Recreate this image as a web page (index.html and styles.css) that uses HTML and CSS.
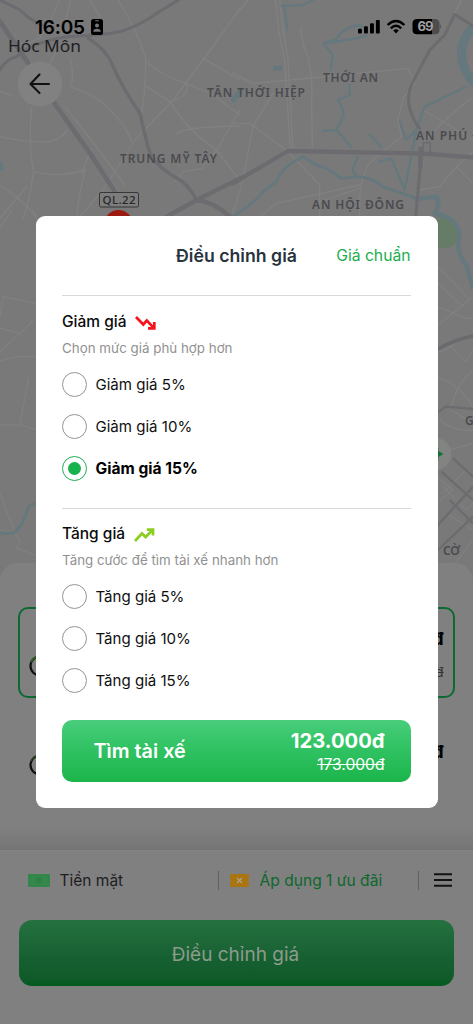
FILE: index.html
```html
<!DOCTYPE html>
<html lang="vi">
<head>
<meta charset="utf-8">
<meta name="viewport" content="width=device-width, initial-scale=1">
<title>Điều chỉnh giá</title>
<link rel="stylesheet" href="styles.css">
</head>
<body>
<main class="screen">
  <section class="map">
    <svg class="map-canvas" viewBox="0 0 473 580" width="473" height="580">
      <rect width="473" height="580" fill="#797979"/>
      <!-- north-west quarter -->
      <g transform="scale(.33333)" fill="none" stroke-linecap="round" stroke-linejoin="round">
        <g stroke="#818181" stroke-width="4">
          <path d="M212 0Q190 90 170 150L148 195M178 0Q145 80 118 115L40 150M270 0L300 50M355 0Q410 90 437 175Q437 270 425 340M720 25L620 165L520 300L405 420L310 570L235 655"/>
          <path d="M210 175Q225 230 210 260Q290 285 330 330Q380 380 395 425M195 320L285 435L375 555M180 330L265 450L355 575"/>
          <path d="M440 185Q490 230 560 250Q570 290 510 305Q470 280 440 260M560 250L640 285L720 345M610 175L720 240M510 305Q560 390 650 450L720 540M530 400Q560 380 720 378M720 330L650 450L605 505L550 515L525 545"/>
          <path d="M95 325Q85 430 100 515Q90 600 70 655M0 410Q90 430 150 425Q195 410 200 390M100 515Q170 535 255 510Q235 590 230 655M275 445L245 520M0 555Q70 600 110 655M0 655L80 560M0 275L35 285"/>
        </g>
        <g stroke="#6b6b70">
          <path stroke-width="9" d="M0 0L60 30Q90 60 125 75M0 210Q20 175 50 170Q100 125 200 110Q330 105 370 92Q430 70 470 40L535 0"/>
          <path stroke-width="10" d="M265 115Q320 150 335 190Q370 270 420 340Q435 410 450 460Q475 505 540 540Q565 555 590 600"/>
          <path stroke-width="14" d="M0 65L85 190M160 305L270 460L345 575"/>
          <path stroke-width="13" d="M500 650L590 600L720 535M590 600Q640 605 690 650"/>
        </g>
        <path stroke="#64787e" stroke-width="16" d="M720 275L700 300M0 490L3 505"/>
      </g>
      <!-- north-east quarter -->
      <g transform="translate(233 0) scale(.33333)" fill="none" stroke-linecap="round" stroke-linejoin="round">
        <g stroke="#818181" stroke-width="4">
          <path d="M128 0Q135 100 155 180L172 450M140 0Q148 80 165 180L180 450M203 80Q205 130 225 170Q240 240 236 300L238 450M45 0L0 55M0 220L60 250L170 240L525 205L545 250L510 295L495 360L505 410L420 480Q375 520 380 650"/>
          <path d="M0 370L50 370L160 450L260 555V650M120 280L60 380L30 540L0 640M260 605L380 565M75 655L130 610L380 555M685 0L665 40M720 290Q640 350 560 440M570 330Q640 370 720 420M720 455L670 500L620 560L560 570M670 500L720 550"/>
        </g>
        <g stroke="#64787e">
          <path stroke-width="7" d="M145 18L210 15L240 0M155 25L163 90M400 90L380 75Q330 80 310 118L270 130L300 165L293 210M275 130Q350 120 400 108M350 255V285L315 300Q335 330 330 350L310 390L355 440M270 392H310M700 260L575 320L550 390L515 570L475 475L440 485M375 470L358 510L370 530M555 385L520 420L500 365M410 405L445 440"/>
          <path stroke-width="8" d="M0 650Q75 600 90 575L130 545Q145 500 210 470L250 495Q280 500 325 535L380 530Q420 535 450 560L550 595"/>
          <path stroke-width="13" d="M550 597L610 590Q625 610 605 640L650 660"/>
          <path stroke-width="26" d="M720 80Q650 160 720 245"/>
        </g>
        <path fill="#64787e" d="M120 200L148 195L145 212H120Z"/>
        <g stroke="#6c6c70">
          <path stroke-width="9" d="M720 78L665 43L635 105L590 150L540 245Q520 285 530 325Q540 360 560 385M565 465L548 650"/>
          <path stroke-width="13" d="M0 550L165 453L560 460L720 472M562 445V500"/>
          <path stroke-width="5" d="M570 455V428H592V460"/>
        </g>
        <path stroke="#857a79" stroke-width="5" d="M720 150Q705 185 720 212"/>
      </g>
      <!-- strip right of the dialog -->
      <g transform="translate(233 210) scale(.33333)" fill="none" stroke-linejoin="round">
        <ellipse cx="635" cy="70" rx="43" ry="45" fill="#677c67"/>
        <path stroke="#64787e" stroke-width="13" d="M600 10Q665 15 680 70Q665 125 700 165L720 235"/>
        <g stroke="#848484" stroke-width="3">
          <path d="M610 165L710 270M610 215L690 290M610 350L720 260M610 290L665 310Q700 330 720 325M640 395L700 455L720 420M610 430L665 405M610 500Q680 520 720 590M720 480Q670 520 655 590M610 620Q660 670 720 660M650 720L720 700M655 600L720 640"/>
          <path d="M610 800L660 840L610 880M630 850L700 780L720 800M630 830L700 900L720 880M640 910L720 960M720 990L650 1080"/>
        </g>
        <path stroke="#69696e" stroke-width="10" d="M610 420Q660 390 720 378"/>
        <path stroke="#6c6c70" stroke-width="7" d="M610 610L638 590L720 597M625 785L720 870M660 745L720 800M610 950L720 830M650 870L720 940M615 1020L720 920"/>
        <circle cx="607" cy="732" r="48" fill="#818481"/>
        <path fill="#146e35" d="M607 710L616 712V723L631 732L616 741V752L607 754Z"/>
      </g>
      <!-- strip left of the dialog -->
      <g transform="translate(0 210) scale(.33333)" fill="none" stroke-linejoin="round">
        <path stroke="#818181" stroke-width="3.5" d="M0 55L35 0M95 0L110 20M0 320L10 260L105 280M0 355L60 370M0 425L60 370L105 325M0 452L50 440H105M85 505L60 645M0 645H60L105 658M0 850L45 970L60 995L50 1015L105 1035M0 960L45 970"/>
        <path stroke="#64787e" stroke-width="9" d="M0 970H40Q75 940 85 890L105 880"/>
      </g>
      <g class="map-labels">
        <text x="120" y="163" textLength="97">TRUNG MỸ TÂY</text>
        <text x="207" y="97" textLength="98">TÂN THỚI HIỆP</text>
        <text x="323" y="81.5" textLength="55">THỚI AN</text>
        <text x="416" y="140" textLength="65">AN PHÚ Đ</text>
        <text x="312" y="209" textLength="92">AN HỘI ĐÔNG</text>
        <text x="465" y="425">G</text>
        <text x="443" y="555" textLength="17">CỜ</text>
      </g>
      <text class="map-town" x="8" y="52" textLength="73" lengthAdjust="spacingAndGlyphs">Hóc Môn</text>
      <circle cx="118.5" cy="224.5" r="14.5" fill="#9d1a12"/>
      <rect x="99.5" y="192.5" width="39" height="14.5" rx="1.5" fill="#7d7d7d" stroke="#37373b"/>
      <text class="map-road" x="102.5" y="204" textLength="33">QL.22</text>
      <circle cx="40" cy="84" r="22.5" fill="#818181"/>
      <path d="M49 84H31M39.5 74.5L30.5 84L39.5 93" fill="none" stroke="#111" stroke-width="2.1" stroke-linecap="round" stroke-linejoin="round"/>
    </svg>
    <header class="status">
      <span class="clock">16:05</span>
      <svg class="focus-icon" width="12" height="16" viewBox="0 0 12 16"><rect width="12" height="16" rx="2.5"/><rect x="4" y="1.3" width="4" height="1" rx=".5" fill="#777"/><circle cx="6" cy="6.6" r="2" fill="#777"/><path d="M2.2 12.8Q2.2 9.8 6 9.8T9.8 12.8Z" fill="#777"/></svg>
      <svg class="signal" width="84" height="16" viewBox="0 0 84 16">
        <rect x="1" y="9.7" width="3.9" height="4.8" rx="1"/><rect x="7" y="7.2" width="3.9" height="7.3" rx="1"/><rect x="13" y="4.2" width="3.9" height="10.3" rx="1"/><rect x="18.9" y="1" width="3.9" height="13.5" rx="1"/>
        <g fill="none" stroke="#000" stroke-width="2.4"><path d="M30.6 6Q39 -2 47.4 6M33.8 9.3Q39 4.4 44.2 9.3"/></g>
        <path d="M36.2 11.4Q39 9.2 41.8 11.4L39 14.4Z"/>
        <path d="M74.5 0H78Q82.5 0 82.5 4.5V10.7Q82.5 15.2 78 15.2H74.5ZM83 5Q84.8 7.5 83 10Z" fill="#4d4d4d"/>
        <path d="M60 0H75V15.2H60Q55.5 15.2 55.5 10.7V4.5Q55.5 0 60 0Z"/>
        <text class="battery-level" x="60.5" y="12" textLength="16">69</text>
      </svg>
    </header>
  </section>

  <section class="sheet">
    <div class="ride ride-selected">
      <svg width="20" height="24" viewBox="0 0 20 24"><circle cx="11" cy="13" r="9.5" fill="none" stroke="#111" stroke-width="2.2"/><path d="M2 9Q5 3 12 3" fill="none" stroke="#2d601d" stroke-width="2"/></svg>
      <div class="fare"><b>đ</b><s>đ</s></div>
    </div>
    <div class="ride">
      <svg width="20" height="24" viewBox="0 0 20 24"><circle cx="11" cy="13" r="9.5" fill="none" stroke="#111" stroke-width="2.2"/><path d="M2 9Q5 3 12 3" fill="none" stroke="#2d601d" stroke-width="1"/></svg>
      <div class="fare"><b>đ</b></div>
    </div>
  </section>

  <footer class="footer">
    <div class="payment">
      <svg class="cash" width="22" height="13" viewBox="0 0 22 13"><rect width="22" height="13" rx="1" fill="#34884c"/><rect x="1.5" y="1.5" width="19" height="10" fill="none" stroke="#2f8147" stroke-width=".5"/><circle cx="11" cy="6.5" r="3" fill="#2f7f46"/></svg>
      <span class="cash-label">Tiền mặt</span>
      <i class="bar"></i>
      <svg class="coupon" width="19" height="13" viewBox="0 0 19 13"><path d="M1 0H18Q19 0 19 1V4.5L18 6.5L19 8.5V12Q19 13 18 13H1Q0 13 0 12V8.5L1 6.5L0 4.5V1Q0 0 1 0Z" fill="#a97513"/><path d="M7 4L12 9M12 4L7 9" stroke="#b5a187" stroke-width="1.2"/></svg>
      <span class="promo">Áp dụng 1 ưu đãi</span>
      <i class="bar bar-end"></i>
      <svg class="menu" width="18" height="14" viewBox="0 0 18 14"><path d="M0 1.2H18M0 7H18M0 12.8H18" stroke="#121212" stroke-width="2"/></svg>
    </div>
    <button class="adjust"><span>Điều chỉnh giá</span></button>
  </footer>

  <div class="dialog" role="dialog">
    <div class="dialog-head">
      <h1>Điều chỉnh giá</h1>
      <a class="standard">Giá chuẩn</a>
    </div>
    <section class="group">
      <h2><span class="t-down">Giảm giá</span>
        <svg width="21" height="16" viewBox="0 0 21 16" fill="none" stroke="#f5141e" stroke-width="2.7"><path d="M1 2L8.3 9.5L11.8 5.5L18.5 12.6"/><path d="M13 13.4H19.3V7"/></svg>
      </h2>
      <p class="p-down">Chọn mức giá phù hợp hơn</p>
      <label class="option"><i class="radio"></i><span>Giảm giá 5%</span></label>
      <label class="option"><i class="radio"></i><span>Giảm giá 10%</span></label>
      <label class="option option-on"><i class="radio"></i><span>Giảm giá 15%</span></label>
    </section>
    <section class="group">
      <h2><span class="t-up">Tăng giá</span>
        <svg width="21" height="16" viewBox="0 0 21 16" fill="none" stroke="#8cce20" stroke-width="2.7"><path d="M1 14L8 6.5L11.6 10L18.5 3"/><path d="M12.8 2.6H19V8.5"/></svg>
      </h2>
      <p class="p-up">Tăng cước để tìm tài xế nhanh hơn</p>
      <label class="option"><i class="radio"></i><span>Tăng giá 5%</span></label>
      <label class="option"><i class="radio"></i><span>Tăng giá 10%</span></label>
      <label class="option"><i class="radio"></i><span>Tăng giá 15%</span></label>
    </section>
    <button class="find">
      <span class="find-label">Tìm tài xế</span>
      <span class="find-price"><b>123.000đ</b><s>173.000đ</s></span>
    </button>
  </div>
</main>
</body>
</html>
```
FILE: styles.css
```css
* { box-sizing: border-box; }
body { margin: 0; font-family: Inter, sans-serif; }
h1, h2, p { margin: 0; }
svg { display: block; flex: none; }
button { border: 0; font-family: inherit; }

.screen {
  position: relative;
  display: flex;
  flex-direction: column;
  width: 473px;
  height: 1024px;
  overflow: hidden;
  background: #808080;
}

.map { position: relative; height: 563px; flex: none; }
.map-labels { font: 600 12px "Noto Sans", sans-serif; fill: #4b4b4f; }
.map-town { font: 400 17px "Noto Sans", sans-serif; fill: #202022; }
.map-road { font: 500 11.5px "Noto Sans", sans-serif; fill: #27272a; }

.status {
  position: absolute;
  inset: 16px 32px auto 35px;
  height: 22px;
  display: flex;
  align-items: center;
}
.clock { width: 50px; padding-top: 1px; font-size: 19px; line-height: 20px; font-weight: 600; white-space: nowrap; letter-spacing: -.2px; }
.focus-icon { margin-left: 5.5px; }
.signal { margin-left: auto; }
.battery-level { font-size: 13px; font-weight: 700; fill: #a0a0a0; }

.sheet {
  position: relative;
  height: 287px;
  flex: none;
  padding: 44px 18px 0;
  border-radius: 18px 18px 0 0;
  background: linear-gradient(to bottom, #808080 265px, #757575 287px);
}
.ride {
  display: flex;
  align-items: center;
  justify-content: space-between;
  height: 91px;
  padding: 0 12px 0 11px;
}
.ride + .ride { margin-top: 7px; padding-top: 26px; }
.ride-selected { padding: 24px 10px 0 9px; border: 2px solid #0d6932; border-radius: 10px; }
.fare { display: flex; flex-direction: column; align-items: flex-end; gap: 13px; margin-right: -.5px; }
.ride-selected .fare { margin-top: -21px; }
.ride:last-child .fare { margin-top: -24px; }
.fare b { font-size: 18px; line-height: 22px; font-weight: 700; }
.fare s { font-size: 13px; line-height: 18px; color: #333; }

.footer { height: 174px; padding: 16px 19px 0; background: #808080; border-top: 1px solid #838383; }
.payment { display: flex; align-items: center; height: 26px; margin-left: 9.5px; }
.cash, .coupon, .menu { margin-left: -.5px; margin-right: .5px; }
.cash-label, .promo { padding-top: 1px; font-size: 15.5px; line-height: 20px; white-space: nowrap; color: #1d1d1f; }
.cash-label { width: 158px; margin-left: 9px; margin-right: .5px; }
.bar { width: 1px; height: 19px; background: #606060; }
.coupon { margin-left: 10.5px; }
.promo { width: 158.5px; margin-left: 10.5px; color: #0d682e; font-size: 15.6px; }
.menu { margin-left: 14.5px; }
.adjust {
  display: flex;
  align-items: center;
  justify-content: center;
  width: 435px;
  height: 66px;
  margin-top: 27px;
  padding: 2px 8px 0 6px;
  border-radius: 13px;
  background: linear-gradient(#25713f, #165f31 60%, #115b2a 88%, #025a1e);
  color: #8d9b8d;
  font-size: 19px;
}

.dialog {
  position: absolute;
  left: 35.5px;
  top: 215.7px;
  width: 402px;
  height: 592.3px;
  padding: 0 26.5px;
  border-radius: 9px;
  background: #fff;
}
.dialog-head { display: grid; grid-template-columns: 1fr auto 1fr; align-items: center; height: 80px; padding-top: 2px; border-bottom: 1.5px solid #d9d9db; }
h1 { grid-column: 2; font-size: 17.7px; font-weight: 600; line-height: 24px; color: #29333d; white-space: nowrap; }
.standard { justify-self: end; padding-right: .5px; font-size: 15.7px; line-height: 24px; color: #1bad4d; white-space: nowrap; }
.group { height: 212px; padding-top: 14px; }
.group + .group { border-top: 1.5px solid #d9d9db; height: 212.3px; padding-top: 13px; }
h2 { display: flex; align-items: center; gap: 8.5px; height: 24px; font-size: 15.5px; font-weight: 500; color: #0b0b0b; white-space: nowrap; }
h2 svg { margin-top: 3px; }
.group p { margin-top: 4px; font-size: 13.35px; line-height: 20px; color: #919191; white-space: nowrap; }
.option { display: flex; align-items: center; gap: 8.5px; height: 42px; font-size: 15.05px; color: #101010; white-space: nowrap; }
.group p + .option { margin-top: 6px; }
.radio { display: grid; place-items: center; width: 25px; height: 25px; border: 1px solid #949494; border-radius: 50%; }
.option-on { font-weight: 700; color: #000; font-size: 15.6px; }
.option-on .radio { border-color: #20ae50; }
.option-on .radio::after { content: ""; width: 13px; height: 13px; border-radius: 50%; background: #17b24c; }
.find {
  display: flex;
  align-items: center;
  justify-content: space-between;
  width: 349px;
  height: 62px;
  padding: 1px 26.5px 0 31.5px;
  border-radius: 10px;
  background: linear-gradient(#49cd7c, #35c568 35%, #1bb54b);
  color: #fff;
}
.find-label { font-size: 19.8px; font-weight: 600; }
.find-price { display: flex; flex-direction: column; align-items: flex-end; padding-top: 2px; }
.find-price b { font-size: 20.2px; line-height: 24px; font-weight: 700; }
.find-price s { font-size: 15.6px; line-height: 23px; }
```
